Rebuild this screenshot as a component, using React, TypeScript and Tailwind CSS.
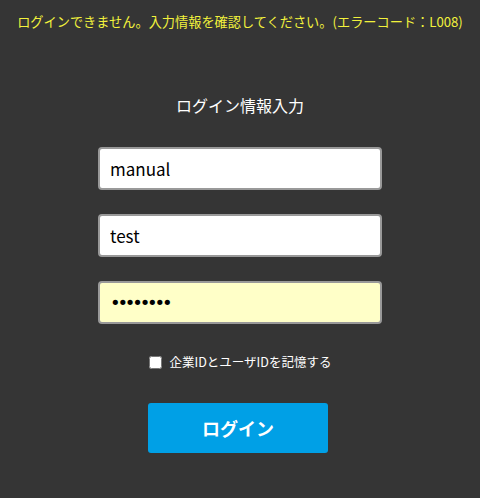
import { useState } from "react";

const font = "font-['Noto_Sans_CJK_JP','Noto_Sans',sans-serif]";

const LoginField = ({
  value,
  type = "text",
  className = "",
}: {
  value: string;
  type?: string;
  className?: string;
}) => (
  <input
    type={type}
    defaultValue={value}
    className={`w-[284px] h-[43px] rounded-[4px] border-2 border-[#999999] px-[10px] text-black outline-none ${className}`}
  />
);

export default function App() {
  const [remember, setRemember] = useState(false);
  return (
    <div className={`w-[480px] h-[498px] bg-[#353535] flex flex-col items-center ${font}`}>
      <p className="mt-[12px] h-[20px] leading-[20px] text-[13.2px] text-[#f2f23c] whitespace-nowrap">
        ログインできません。入力情報を確認してください。(エラーコード：L008)
      </p>

      <h1 className="mt-[61px] text-[16px] leading-[24px] text-white">ログイン情報入力</h1>

      <div className="mt-[30px] flex flex-col gap-[24px]">
        <LoginField value="manual" className={`bg-white text-[17px] ${font}`} />
        <LoginField value="test" className={`bg-white text-[17px] ${font}`} />
        <LoginField
          value="password"
          type="password"
          className="bg-[#ffffc8] text-[18px] font-['DejaVu_Sans',sans-serif] tracking-[-3.2px]"
        />
      </div>

      <label className="mt-[30px] flex items-center gap-[8px] text-[12.5px] leading-[16px] text-white">
        <input
          type="checkbox"
          checked={remember}
          onChange={(e) => setRemember(e.target.checked)}
          className="w-[13px] h-[13px] m-0"
        />
        企業IDとユーザIDを記憶する
      </label>

      <button className="mt-[33px] -ml-[4px] w-[180px] h-[50px] rounded-[3px] bg-[#00a0e6] text-white text-[18px] font-bold">
        ログイン
      </button>
    </div>
  );
}
